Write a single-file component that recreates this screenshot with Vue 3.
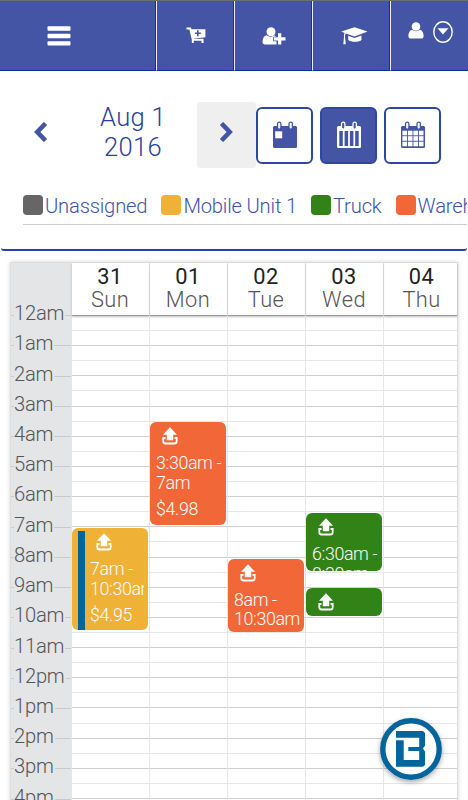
<template>
    <div class="page">
        <nav class="topbar">
            <a class="nav-item menu" href="#">
                <svg width="24" height="20" viewBox="0 0 24 20">
                    <rect x="0.5" y="0.3" width="23" height="4.4" rx="1" />
                    <rect x="0.5" y="7.8" width="23" height="4.4" rx="1" />
                    <rect x="0.5" y="15.2" width="23" height="4.4" rx="1" />
                </svg>
            </a>
            <a class="nav-item" href="#">
                <svg width="20" height="18" viewBox="0 0 20 18">
                    <path class="stroke" d="M.5 1.600h3.700l2.600 11.200v3.200M6 12.800h11.500M16.500 13v3" />
                    <path fill-rule="evenodd" d="M4.800 2.200H19.400v8L6.800 11.800zM11 3.300v2.200H8.900v1.600H11v2.100h1.600V7.100h2.200V5.500H12.600V3.300z" />
                </svg>
            </a>
            <a class="nav-item" href="#">
                <svg width="24" height="18" viewBox="0 0 24 18">
                    <circle cx="9" cy="4.800" r="4.500" />
                    <path d="M4.600 8.300C1.800 9 .5 11.500.5 14.800c0 1.700.9 2.700 2.500 2.700h11.500v-3.200h-3.300v-4.600h2.600c-.3-.7-.8-1.200-1.400-1.400-2.200 1.800-5.600 1.800-7.800 0z" />
                    <path d="M16 6.300h3.300v3.900h4.200v3.300h-4.200v4H16v-4h-4v-3.300h4z" />
                </svg>
            </a>
            <a class="nav-item cap" href="#">
                <svg width="27" height="18" viewBox="0 0 27 18">
                    <path d="M13.500.3L26.600 4.600 13.500 9.500 5 6.600c-.8.500-1 1.700-1 3.200l.8 7.500H2.300L3 9.800C2.900 8 3.100 6.700 3.600 5.900L.3 4.600z" />
                    <path d="M7.200 8.700l6.300 2.200 7-2.500v4.400c-1.500 2.700-11.300 2.700-13.300 0z" />
                </svg>
            </a>
            <a class="nav-item user" href="#">
                <svg width="16" height="17" viewBox="0 0 16 17">
                    <circle cx="8" cy="4.500" r="4.300" />
                    <path d="M4 7.800C1.600 8.500.4 11 .4 14c0 1.600.9 2.600 2.300 2.600h10.600c1.400 0 2.300-1 2.300-2.600 0-3-1.200-5.500-3.600-6.200-2.300 1.900-5.700 1.900-8 0z" />
                </svg>
                <svg width="20" height="22" viewBox="0 0 20 22">
                    <ellipse class="ring" cx="10" cy="11" rx="9.200" ry="10.200" />
                    <path d="M4.500 7.300h11L10 13.500z" />
                </svg>
            </a>
        </nav>

        <section class="toolbar">
            <div class="controls">
                <button class="arrow">
                    <svg width="14" height="20" viewBox="0 0 14 20"><path d="M11.500 1.500L3.300 10l8.200 8.500" /></svg>
                </button>
                <h1>Aug 1<br>2016</h1>
                <button class="arrow next">
                    <svg width="14" height="20" viewBox="0 0 14 20"><path d="M2.500 1.500L10.700 10l-8.200 8.500" /></svg>
                </button>
                <div class="views">
                    <button v-for="view in views" :key="view" class="view" :class="{ active: view === currentView }" @click="currentView = view">
                        <svg width="26" height="28" viewBox="0 0 26 28">
                            <rect class="ink" x="1" y="5" width="24" height="22" rx="1.500" />
                            <rect v-if="view === 'day'" class="paper" x="3.200" y="10.300" width="7" height="7" />
                            <template v-if="view === 'week'">
                                <rect v-for="x in [3.3, 8.6, 13.9, 19.2]" :key="x" class="paper" :x="x" y="10" width="3.500" height="15" />
                            </template>
                            <template v-if="view === 'month'">
                                <template v-for="y in [9.7, 15.2, 20.7]" :key="y">
                                    <rect v-for="x in [2.4, 7.9, 13.4, 18.9]" :key="x" class="paper" :x="x" :y="y" width="4.600" height="4.600" />
                                </template>
                            </template>
                            <rect class="ringlet" x="5.500" y="1.200" width="3.400" height="7" rx="1.700" />
                            <rect class="ringlet" x="17" y="1.200" width="3.400" height="7" rx="1.700" />
                        </svg>
                    </button>
                </div>
            </div>
            <ul class="legend">
                <li v-for="unit in units" :key="unit.name">
                    <span class="swatch" :class="unit.color"></span>{{ unit.name }}
                </li>
            </ul>
        </section>

        <main class="calendar">
            <div class="gutter">
                <div v-for="hour in hours" :key="hour" class="hour"><span>{{ hour }}</span></div>
            </div>
            <div v-for="day in days" :key="day.date" class="day">
                <header>
                    <strong>{{ day.date }}</strong>
                    <span>{{ day.name }}</span>
                </header>
                <div class="slots">
                    <div v-for="n in 34" :key="n" class="slot"></div>
                    <article
                        v-for="event in day.events"
                        :key="event.top"
                        class="event"
                        :class="[event.color, { marked: event.marked }]"
                        :style="{ top: event.top + 'px', height: event.height + 'px' }"
                    >
                        <svg width="16" height="18" viewBox="0 0 16 18">
                            <path d="M8 .3l7 7.500H11.200v5.400H4.800V7.800H1z" />
                            <path class="tray" d="M3.500 11H1.300v3.200c0 1.500.8 2.300 2.300 2.300h8.800c1.500 0 2.300-.8 2.300-2.300V11h-2.200" />
                        </svg>
                        <p v-for="line in event.time" :key="line">{{ line }}</p>
                        <p v-if="event.price" class="price">{{ event.price }}</p>
                    </article>
                </div>
            </div>
        </main>

        <button class="brand">
            <svg width="62" height="62" viewBox="0 0 62 62">
                <circle cx="31" cy="31" r="28.200" />
                <path d="M16 13h27l2 2v12.500L43 30.500l2 3V47l-2 1.700H16V22.300h7.700V42h15.500v-9H28.300v-4h10.900v-9.300H16z" />
            </svg>
        </button>
    </div>
</template>

<script setup>
import { ref } from 'vue';

const views = ['day', 'week', 'month'];
const currentView = ref('week');

const units = [
    { name: 'Unassigned', color: 'grey' },
    { name: 'Mobile Unit 1', color: 'yellow' },
    { name: 'Truck', color: 'green' },
    { name: 'Warehouse', color: 'orange' },
];

const hours = [
    '12am', '1am', '2am', '3am', '4am', '5am', '6am', '7am', '8am',
    '9am', '10am', '11am', '12pm', '1pm', '2pm', '3pm', '4pm',
];

// top and height are measured from the 12am line
const days = [
    {
        date: '31',
        name: 'Sun',
        events: [
            { top: 212, height: 102, color: 'yellow', marked: true, time: ['7am -', '10:30am'], price: '$4.95' },
        ],
    },
    {
        date: '01',
        name: 'Mon',
        events: [
            { top: 106, height: 103, color: 'orange', time: ['3:30am -', '7am'], price: '$4.98' },
        ],
    },
    {
        date: '02',
        name: 'Tue',
        events: [
            { top: 242.5, height: 73.5, color: 'orange', time: ['8am -', '10:30am'] },
        ],
    },
    {
        date: '03',
        name: 'Wed',
        events: [
            { top: 197, height: 58, color: 'green', time: ['6:30am -', '8:30am'] },
            { top: 272, height: 28, color: 'green', time: [] },
        ],
    },
    { date: '04', name: 'Thu', events: [] },
];
</script>

<style>
body {
    background: #fff;
}
</style>

<style scoped>
.page {
    width: 468px;
    height: 800px;
    overflow: hidden;
    position: relative;
    font-family: Roboto, 'Liberation Sans', sans-serif;
    font-weight: 300;
}

.page * {
    box-sizing: border-box;
}

svg {
    display: block;
    flex: none;
}

button {
    border: none;
    background: none;
    padding: 0;
}

.topbar {
    height: 71px;
    display: grid;
    grid-template-columns: 156px 78px 78px 78px 78px;
    border-top: 1px solid #6c6c75;
    overflow: hidden;
}

.nav-item {
    display: flex;
    align-items: center;
    justify-content: center;
    padding-left: 2px;
    background: #4355a4;
    border-right: 1px solid #12319b;
    border-bottom: 1px solid #0c2b9b;
    border-left: 1px solid #e9ebf5;
}

.nav-item.menu {
    border-left: none;
    padding: 0 38px 0 0;
}

.nav-item:last-child {
    border-right: none;
}

.nav-item svg {
    fill: #fff;
}

.nav-item .stroke {
    fill: none;
    stroke: #fff;
    stroke-width: 2;
}

.nav-item .ring {
    fill: none;
    stroke: #fff;
    stroke-width: 1.4;
}

.nav-item.cap {
    padding-left: 6px;
}

.nav-item.user {
    gap: 9px;
    padding-bottom: 8px;
}

.user svg:first-child {
    margin-top: -2px;
}

.toolbar {
    height: 180px;
    margin: 0 1px;
    border-bottom: 2px solid #2843a4;
    border-radius: 0 0 3px 3px;
    overflow: hidden;
}

.controls {
    display: flex;
    align-items: center;
    height: 66px;
    margin-top: 31px;
}

.arrow {
    width: 79px;
    height: 66px;
    padding-bottom: 6px;
    display: flex;
    align-items: center;
    justify-content: center;
}

.arrow path {
    fill: none;
    stroke: #4355a4;
    stroke-width: 4.6;
}

.arrow.next {
    width: 59px;
    padding-right: 2px;
    background: #efefef;
    border-radius: 3px;
}

h1 {
    width: 106px;
    margin: -7px 11px 0 0;
    font-size: 25.5px;
    line-height: 30px;
    font-weight: 300;
    text-align: center;
    color: #2a40a2;
    letter-spacing: 0.3px;
}

.views {
    display: flex;
    gap: 7px;
}

.view {
    width: 57px;
    height: 57px;
    margin-top: 1px;
    border: 2px solid #2f47a4;
    border-radius: 6px;
    display: flex;
    align-items: center;
    justify-content: center;
    padding-bottom: 2px;
}

.view .ink {
    fill: #4355a4;
}

.view .paper {
    fill: #fff;
}

.view .ringlet {
    fill: #fff;
    stroke: #4355a4;
    stroke-width: 1.3;
}

.view.active {
    background: #4355a4;
}

.view.active .ink {
    fill: #fff;
}

.view.active .paper {
    fill: #4355a4;
}

.view.active .ringlet {
    fill: #4355a4;
    stroke: #fff;
}

.legend {
    list-style: none;
    margin: 20px -1px 0 22px;
    padding: 0;
    height: 37px;
    display: flex;
    gap: 14px;
    overflow: hidden;
    border-bottom: 1px solid #ccc;
    font-size: 20.2px;
    letter-spacing: -0.18px;
    line-height: 35px;
    color: #4053ab;
    white-space: nowrap;
}

.legend li {
    display: flex;
    align-items: center;
}

.swatch {
    flex: none;
    width: 20px;
    height: 20px;
    margin: -3px 2px 0 0;
    border-radius: 4px;
}

.grey {
    background: #666;
}

.yellow {
    background: #f0b137;
}

.green {
    background: #328317;
}

.orange {
    background: #f16738;
}

.calendar {
    display: grid;
    grid-template-columns: 60px 78px 78px 78px 78px 74px;
    width: 448px;
    height: 560px;
    margin: 11px 0 0 10px;
    border: 1px solid #ddd;
    box-shadow: 0 0 4px rgba(0, 0, 0, 0.18);
}

.gutter {
    padding-top: 35px;
    background: #e4e5e7;
}

.hour {
    height: 30.22px;
    display: flex;
    align-items: center;
    font-size: 20.2px;
    line-height: 24px;
    letter-spacing: -0.25px;
    color: #555;
}

.hour::before,
.hour::after {
    content: '';
    height: 1px;
    margin-top: 5px;
    background: #c9cacc;
}

.hour::before {
    width: 3px;
}

.hour::after {
    flex: 1;
    margin-left: 1px;
}

.day {
    border-left: 1px solid #e6e6e6;
}

.day header {
    height: 53px;
    padding: 2px 1px 0 0;
    display: flex;
    flex-direction: column;
    align-items: center;
    border-bottom: 1px solid #999;
    box-shadow: 0 1px 2px rgba(0, 0, 0, 0.25);
    font-size: 21.8px;
    line-height: 23px;
    letter-spacing: 0.4px;
    color: #555;
}

.day:last-child header {
    padding-right: 0;
    padding-left: 2px;
}

.day strong {
    font-weight: 400;
    color: #222;
}

.slots {
    position: relative;
}

.slot {
    height: 15.1px;
    border-bottom: 1px solid #e6e6e6;
}

.slot:nth-child(even) {
    border-bottom-color: #cfcfcf;
}

.event {
    position: absolute;
    left: 0;
    width: 76px;
    padding: 5px 0 0 6px;
    border-radius: 6px;
    overflow: hidden;
    white-space: nowrap;
    font-size: 17.8px;
    letter-spacing: -0.35px;
    line-height: 19.8px;
    color: #fff;
}

.event svg {
    margin: 0 0 8px 6px;
    fill: #fff;
}

.event .tray {
    fill: none;
    stroke: #fff;
    stroke-width: 1.8;
}

.event p {
    margin: 0;
    overflow: hidden;
}

.event .price {
    margin-top: 6px;
}

.event.marked {
    padding: 5px 4px 0 18px;
}

.event.marked::before {
    content: '';
    position: absolute;
    left: 6px;
    top: 3px;
    bottom: 0;
    width: 7px;
    background: #04649c;
}

.brand {
    position: absolute;
    left: 380px;
    top: 718px;
    border-radius: 50%;
    box-shadow: 0 2px 5px rgba(0, 0, 0, 0.35);
}

.brand circle {
    fill: #fff;
    stroke: #04649c;
    stroke-width: 5.4;
}

.brand path {
    fill: #04649c;
}
</style>
